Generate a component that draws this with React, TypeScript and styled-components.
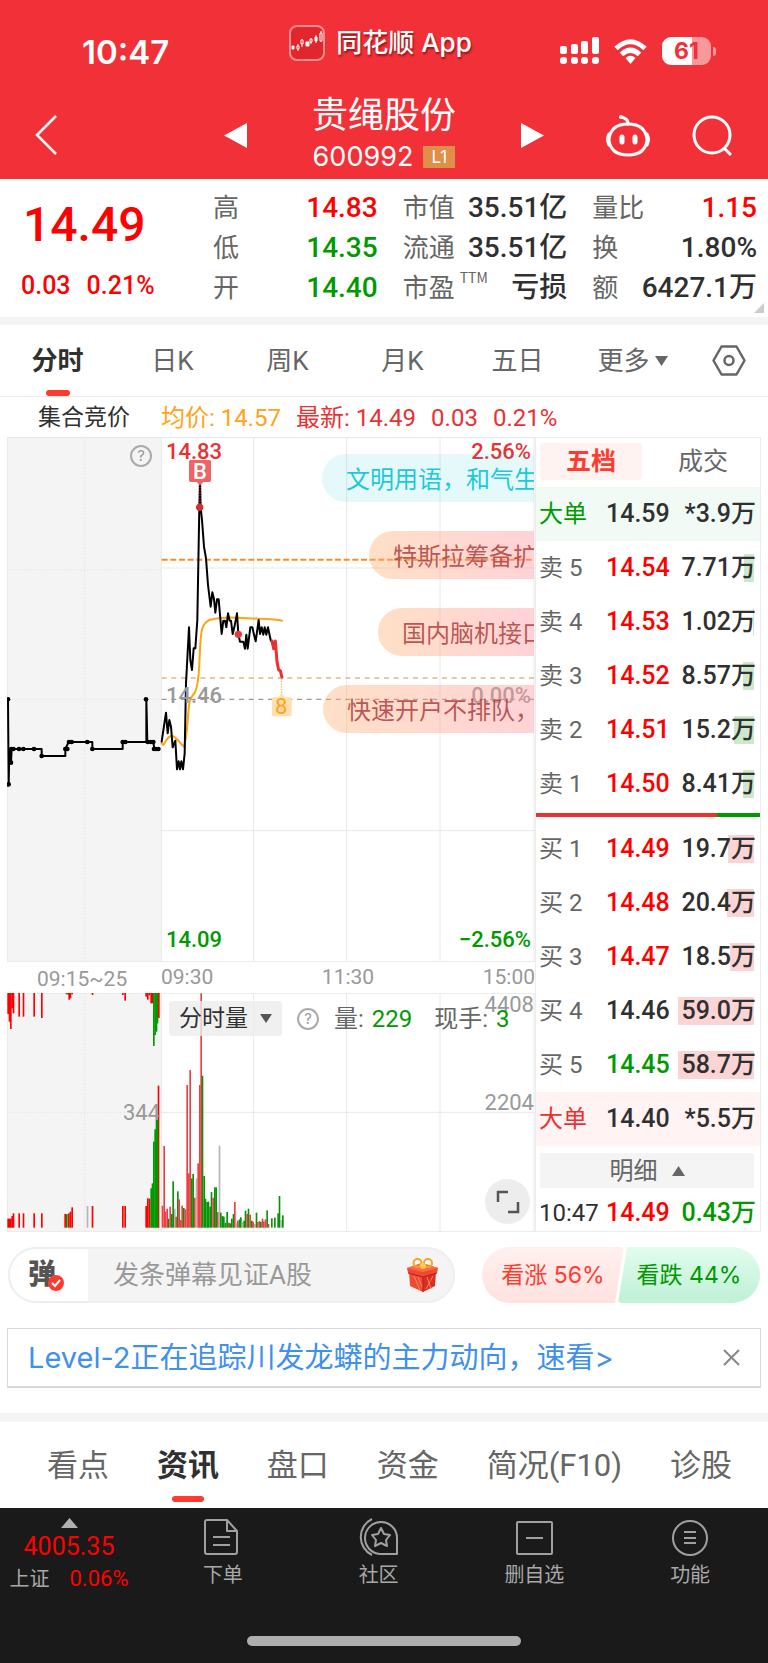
import React from 'react';
import styled, { createGlobalStyle, css } from 'styled-components';

const c = {
  brand: '#f23037',
  red: '#ff0000',
  softRed: '#eb3032',
  green: '#009900',
  ink: '#303030',
  grey: '#666666',
  pale: '#999999',
  line: '#ececec',
  band: '#f4f4f4',
  orange: '#ffa319',
};

const cjk = '"Noto Sans CJK SC", sans-serif';
const num = `Roboto, ${cjk}`;
const ui = `Inter, ${cjk}`;

const Global = createGlobalStyle`
  * { box-sizing: border-box; }
  body { margin: 0; background: #fff; color: ${c.ink}; font-family: ${num}; }
  button { border: 0; padding: 0; margin: 0; background: none; font: inherit; color: inherit; cursor: pointer; }
  a { color: inherit; text-decoration: none; }
  svg { display: block; flex: none; }
  table { border-collapse: collapse; }
  dl, dd, dt, h1, p { margin: 0; font-weight: inherit; }
`;

/* ---------- header ---------- */

const Header = styled.header`
  height: 179px;
  background: ${c.brand};
  color: #fff;
`;

const StatusBar = styled.div`
  display: grid;
  grid-template-columns: 1fr auto 1fr;
  align-items: center;
  height: 86px;
  padding: 0 57px 0 82px;
`;

const Clock = styled.time`
  padding-top: 17px;
  font: 600 33px/40px ${ui};
`;

const AppName = styled.div`
  display: flex;
  align-items: center;
  gap: 11px;
  margin-left: -32px;
  font: 500 26px/40px ${ui};
  text-shadow: 1px 2px 2px rgba(60, 0, 0, 0.55);
`;

const StatusIcons = styled.div`
  display: flex;
  justify-content: flex-end;
  align-items: center;
  gap: 15px;
  padding-top: 16px;
`;

const Battery = styled.span`
  position: relative;
  width: 49px;
  height: 28px;
  border-radius: 9px;
  background: linear-gradient(90deg, #fff 61%, #f9989b 61%);
  color: ${c.brand};
  font: 700 23px/28px ${ui};
  text-align: center;

  &::after {
    content: '';
    position: absolute;
    left: 51px;
    top: 10px;
    width: 3px;
    height: 9px;
    border-radius: 0 3px 3px 0;
    background: #f9989b;
  }
`;

const NavBar = styled.nav`
  display: grid;
  grid-template-columns: 1fr 320px 1fr;
  align-items: center;
  height: 93px;
  padding: 4px 35px 0;
`;

const NavSide = styled.div<{ $end?: boolean }>`
  display: flex;
  align-items: center;
  gap: 41px;
  justify-content: ${(p) => (p.$end ? 'flex-end' : 'flex-start')};
`;

const Switcher = styled.div`
  display: flex;
  align-items: center;
  justify-content: space-between;
`;

const StockTitle = styled.div`
  text-align: center;
`;

const StockName = styled.h1`
  font: 400 36px/44px ${cjk};
`;

const StockCode = styled.p`
  display: flex;
  align-items: center;
  justify-content: center;
  gap: 10px;
  font: 400 27px/46px ${ui};
`;

const LevelTag = styled.span`
  width: 32px;
  height: 22px;
  background: #e08f47;
  font: 400 17px/22px ${ui};
`;

/* ---------- quote ---------- */

const Quote = styled.section`
  display: flex;
  position: relative;
  height: 146px;
  padding: 9px 11px 0 0;
  border-bottom: 8px solid ${c.band};

  &::after {
    content: '';
    position: absolute;
    right: 4px;
    bottom: 4px;
    border: 5px solid;
    border-color: transparent #ccc #ccc transparent;
  }
`;

const LastPrice = styled.div`
  flex: 0 0 213px;
  padding-left: 21px;
  color: ${c.red};
  font-weight: 500;
`;

const BigPrice = styled.p`
  padding-left: 2px;
  font-size: 48px;
  line-height: 74px;
`;

const Change = styled.p`
  display: flex;
  gap: 16px;
  font-size: 25px;
  line-height: 48px;
`;

const Stats = styled.dl`
  flex: 1;
  display: grid;
  grid-template-columns: repeat(3, 1fr);
  grid-auto-rows: 40px;
  column-gap: 25px;
`;

const Stat = styled.div<{ $color?: string }>`
  display: flex;
  justify-content: space-between;
  white-space: nowrap;
  line-height: 40px;

  dt { color: ${c.grey}; font-size: 26px; }
  dd { color: ${(p) => p.$color || c.ink}; font-size: 28px; font-weight: 500; }
  sup { display: inline-block; margin-left: 5px; font: 400 14px/16px ${cjk}; vertical-align: 14px; }
`;

/* ---------- period tabs ---------- */

const PeriodTabs = styled.nav`
  display: grid;
  grid-template-columns: repeat(6, 115fr) 78fr;
  height: 72px;
  border-bottom: 1px solid ${c.line};
`;

const tabMark = css`
  &::after {
    content: '';
    position: absolute;
    left: 50%;
    bottom: 0;
    width: 24px;
    height: 6px;
    margin-left: -12px;
    border-radius: 3px;
    background: #ff3b30;
  }
`;

const PeriodTab = styled.button<{ $on?: boolean }>`
  position: relative;
  display: flex;
  align-items: center;
  justify-content: center;
  gap: 5px;
  font-size: 26px;
  line-height: 36px;
  color: ${(p) => (p.$on ? c.ink : c.grey)};
  font-weight: ${(p) => (p.$on ? 700 : 400)};
  ${(p) => p.$on && tabMark}
`;

const Summary = styled.div`
  display: flex;
  gap: 15px;
  height: 40px;
  padding-left: 38px;
  font-size: 24px;
  line-height: 42px;
  color: ${c.softRed};
`;

const SummaryLead = styled.span`
  width: 108px;
  color: ${c.ink};
  font-size: 23px;
`;

const Average = styled.span`
  color: ${c.orange};
`;

/* ---------- market board ---------- */

const Board = styled.main`
  display: flex;
  margin: 0 7px;
  height: 795px;
  border-bottom: 1px solid ${c.line};
`;

const Charts = styled.section`
  flex: 1;
  min-width: 0;
`;

const Pane = styled.div<{ $height: number }>`
  position: relative;
  height: ${(p) => p.$height}px;
  overflow: hidden;
`;

const Plot = styled.svg`
  width: 100%;
  height: 100%;
`;

const Mark = styled.span<{ $x: string; $y: number; $right?: boolean; $color: string; $bold?: boolean }>`
  position: absolute;
  ${(p) => (p.$right ? 'right' : 'left')}: ${(p) => p.$x};
  top: ${(p) => p.$y}px;
  font-size: 22px;
  line-height: 24px;
  font-weight: ${(p) => (p.$bold ? 500 : 400)};
  color: ${(p) => p.$color};
`;

const HelpButton = styled.button`
  width: 22px;
  height: 22px;
  border: 2px solid #aaa;
  border-radius: 50%;
  color: ${c.pale};
  font: 400 15px/18px ${ui};
`;

const AuctionHelp = styled(HelpButton)`
  position: absolute;
  left: 123px;
  top: 8px;
`;

const Comments = styled.div`
  position: absolute;
  left: 315px;
  right: 1px;
  top: 17px;
  display: flex;
  flex-direction: column;
  gap: 29px;
  overflow: hidden;
`;

const Comment = styled.span<{ $indent: number; $cool?: boolean }>`
  height: 48px;
  margin-left: ${(p) => p.$indent}px;
  padding-left: 24px;
  border-radius: 24px 0 0 24px;
  white-space: nowrap;
  font: 400 24px/48px ${cjk};
  color: ${(p) => (p.$cool ? '#1cc9dc' : 'rgba(176, 62, 62, 0.85)')};
  background: ${(p) =>
    p.$cool
      ? 'rgba(0, 196, 220, 0.1)'
      : 'linear-gradient(90deg, rgba(255, 176, 112, 0.4), rgba(255, 150, 160, 0.42))'};
`;

const TimeAxis = styled.div`
  display: flex;
  height: 32px;
  border-top: 1px solid ${c.line};
  color: ${c.pale};
  font-size: 21px;
  line-height: 30px;
`;

const AuctionTime = styled.span`
  width: 154px;
  padding-left: 30px;
  line-height: 34px;
`;

const SessionTime = styled.div`
  flex: 1;
  display: flex;
  justify-content: space-between;
`;

const VolumeBar = styled.div`
  position: absolute;
  left: 162px;
  top: 8px;
  display: flex;
  align-items: center;
  height: 35px;
  font-size: 24px;
  line-height: 34px;
  color: ${c.grey};
  white-space: nowrap;

  b { margin-left: 8px; font-weight: 400; color: ${c.green}; }
`;

const IndicatorSelect = styled.button`
  display: flex;
  align-items: center;
  gap: 12px;
  height: 35px;
  margin-right: 15px;
  padding: 0 10px;
  border-radius: 3px;
  background: rgba(236, 236, 236, 0.8);
  color: ${c.ink};
  font-size: 23px;
`;

const VolumeItem = styled.span<{ $gap: number }>`
  margin-left: ${(p) => p.$gap}px;
`;

const ExpandButton = styled.button`
  position: absolute;
  right: 5px;
  bottom: 7px;
  display: grid;
  place-items: center;
  width: 45px;
  height: 45px;
  border-radius: 50%;
  background: #ededed;
`;

/* ---------- order book ---------- */

const Book = styled.aside`
  flex: 0 0 226px;
  min-width: 0;
  border: solid ${c.line};
  border-width: 1px 1px 0 1px;
`;

const BookTabs = styled.div`
  display: flex;
  height: 49px;
  padding: 5px 0 7px 4px;
`;

const BookTab = styled.button<{ $on?: boolean }>`
  flex: 1;
  padding-left: 4px;
  border-radius: 4px;
  font-size: 25px;
  line-height: 36px;
  color: ${c.grey};
  ${(p) => p.$on && `flex: 0 0 102px; padding: 0; background: #fff3f2; color: #ff3b30; font-weight: 700;`}
`;

const Depth = styled.table`
  width: 100%;
  table-layout: fixed;
  line-height: 28px;
`;

const DepthRow = styled.tr<{ $bg?: string; $label?: string; $tall?: number }>`
  height: ${(p) => p.$tall || 54}px;
  background: ${(p) => p.$bg || 'none'};

  th { color: ${(p) => p.$label || c.grey}; }
`;

const Level = styled.th`
  width: 70px;
  padding: 0 0 0 3px;
  text-align: left;
  font-size: 24px;
  font-weight: 400;
  white-space: nowrap;
`;

const Price = styled.td<{ $color: string }>`
  width: 68px;
  padding: 0;
  font-size: 25px;
  font-weight: 500;
  color: ${(p) => p.$color};
`;

const Lots = styled.td<{ $color?: string }>`
  padding: 0 4px 0 0;
  text-align: right;
  font-size: 25px;
  font-weight: 500;
  white-space: nowrap;
  color: ${(p) => p.$color || c.ink};
`;

const LotsFill = styled.span<{ $width: number; $color: string }>`
  display: block;
  background: linear-gradient(${(p) => p.$color}, ${(p) => p.$color}) no-repeat right 2px top / ${(p) => p.$width}px 100%;
`;

const Ratio = styled.div`
  height: 4px;
  margin: 2px 0 5px;
  background: linear-gradient(90deg, ${c.softRed} 81%, ${c.green} 81%);
`;

const DetailButton = styled.button`
  display: flex;
  align-items: center;
  justify-content: center;
  gap: 14px;
  width: calc(100% - 10px);
  height: 35px;
  margin: 7px 5px 4px 4px;
  background: ${c.band};
  color: ${c.grey};
  font-size: 24px;
  line-height: 34px;
`;

/* ---------- comment box, votes, banner ---------- */

const ActionRow = styled.section`
  display: flex;
  justify-content: space-between;
  padding: 15px 8px 0;
`;

const CommentBox = styled.label`
  display: flex;
  align-items: center;
  flex: 0 1 447px;
  height: 56px;
  padding-right: 14px;
  overflow: hidden;
  border: 2px solid #eee;
  border-radius: 28px;
  background: ${c.band};
`;

const CommentToggle = styled.span`
  position: relative;
  flex: 0 0 78px;
  height: 56px;
  padding-left: 18px;
  background: #fff;
  color: #555;
  font: 900 28px/50px ${cjk};

  svg { position: absolute; left: 38px; top: 28px; }
`;

const CommentInput = styled.input`
  flex: 1;
  min-width: 0;
  padding: 0 0 0 25px;
  border: 0;
  outline: 0;
  background: none;
  font: 400 26px/40px ${num};

  &::placeholder { color: ${c.pale}; opacity: 1; }
`;

const Votes = styled.div`
  display: flex;
`;

const Vote = styled.button<{ $up?: boolean }>`
  width: 142px;
  height: 56px;
  font: 400 23px/56px ${ui};
  ${(p) =>
    p.$up
      ? css`
          border-radius: 28px 4px 6px 28px;
          background: linear-gradient(#fff0ef, #ffe2df);
          color: #ff3b30;
          clip-path: polygon(0 0, 100% 0, calc(100% - 9px) 100%, 0 100%);
        `
      : css`
          margin-left: -6px;
          border-radius: 6px 28px 28px 4px;
          background: linear-gradient(#e2fcee, #bff0d6);
          color: ${c.green};
          clip-path: polygon(9px 0, 100% 0, 100% 100%, 0 100%);
        `}
`;

const Banner = styled.section`
  display: flex;
  align-items: center;
  justify-content: space-between;
  height: 60px;
  margin: 25px 7px;
  padding: 0 20px;
  border: 1px solid #d8d8d8;
  border-bottom-width: 2px;
  color: #4090ee;
  font: 400 29px/58px ${ui};
`;

const InfoTabs = styled.nav`
  display: flex;
  justify-content: space-between;
  height: 95px;
  padding: 0 36px 0 47px;
  border-top: 9px solid ${c.band};
`;

const InfoTab = styled.button<{ $on?: boolean }>`
  position: relative;
  font-size: 31px;
  line-height: 88px;
  color: ${(p) => (p.$on ? c.ink : c.grey)};
  font-weight: ${(p) => (p.$on ? 700 : 400)};
  ${(p) => p.$on && tabMark}

  &::after { bottom: 6px; width: 32px; margin-left: -16px; }
`;

/* ---------- bottom bar ---------- */

const Footer = styled.footer`
  height: 155px;
  background: #1a1a1a;
  color: #a8a8a8;
`;

const Dock = styled.div`
  display: grid;
  grid-template-columns: 145px repeat(4, 1fr);
  height: 128px;
`;

const IndexQuote = styled.a`
  display: flex;
  flex-direction: column;
  align-items: center;
  width: 138px;
  padding-top: 10px;
  color: ${c.red};
  font-size: 25px;
  line-height: 38px;
`;

const IndexLine = styled.span`
  display: flex;
  gap: 20px;
  font-size: 22px;
  line-height: 26px;

  small { color: #a8a8a8; font-size: 20px; }
`;

const DockItem = styled.a`
  display: flex;
  flex-direction: column;
  align-items: center;
  gap: 5px;
  padding-top: 10px;
  font-size: 20px;
  line-height: 28px;
`;

const HomeIndicator = styled.div`
  width: 274px;
  height: 10px;
  margin: 0 auto;
  border-radius: 5px;
  background: #aeaeae;
`;

/* ---------- data ---------- */

const stats: [React.ReactNode, string, string?][] = [
  ['高', '14.83', c.red],
  ['市值', '35.51亿'],
  ['量比', '1.15', c.red],
  ['低', '14.35', c.green],
  ['流通', '35.51亿'],
  ['换', '1.80%'],
  ['开', '14.40', c.green],
  [<>市盈<sup>TTM</sup></>, '亏损'],
  ['额', '6427.1万'],
];

const asks: [string, string, string, number][] = [
  ['卖 5', '14.54', '7.71万', 10],
  ['卖 4', '14.53', '1.02万', 1],
  ['卖 3', '14.52', '8.57万', 11],
  ['卖 2', '14.51', '15.2万', 20],
  ['卖 1', '14.50', '8.41万', 11],
];

const bids: [string, string, string, number, string][] = [
  ['买 1', '14.49', '19.7万', 26, c.red],
  ['买 2', '14.48', '20.4万', 27, c.red],
  ['买 3', '14.47', '18.5万', 24, c.red],
  ['买 4', '14.46', '59.0万', 76, c.ink],
  ['买 5', '14.45', '58.7万', 76, c.green],
];

const PRICE =
  '485,935 498,848 503,910 508,870 513,890 518,952 526,932 531,1018 536,994 540,1018 544,994 549,1018 554,970 558,760 567,592 571,690 576,720 581,655 586,655 592,570 598,232 600,150 602,232 606,270 612,350 618,385 624,465 632,530 637,487 642,508 646,548 651,508 656,508 665,612 670,572 675,572 679,592 684,550 689,572 693,572 698,612 703,592 711,550 715,612 720,635 730,635 735,656 739,614 743,656 751,592 757,592 762,614 767,634 776,570 780,612 785,592 790,614 794,592 799,614 804,592 812,630 817,638';
const FALLING = '816,633 821,656 826,633 831,695 836,720 841,722 846,742';
const AUCTION =
  '24,808 26,1063 28,957 33,998 35,957 125,957 125,978 196,978 196,957 206,936 277,936 277,957 368,957 368,936 439,936 439,808 442,936 460,936 463,957 478,957';
const AUCTION_DOTS = [
  [24, 808], [26, 1063], [33, 998], [34, 957], [40, 957], [57, 957], [70, 957], [102, 957], [125, 978],
  [196, 957], [202, 957], [207, 936], [215, 936], [262, 936], [277, 957], [368, 936], [376, 936], [438, 808],
  [443, 936], [452, 936], [460, 936], [462, 957], [468, 957], [475, 957],
];

// x position, top of the bar, and colour key: r rise, g fall, n unchanged
type Bar = [number, number, 'r' | 'g' | 'n'];
const VOLUME: Bar[] = [
  [487, 827, 'r'], [492, 648, 'r'], [496, 845, 'r'], [501, 836, 'r'], [505, 866, 'g'], [510, 830, 'r'],
  [515, 852, 'g'], [519, 754, 'g'], [524, 836, 'n'], [528, 860, 'r'], [533, 784, 'g'], [537, 808, 'r'],
  [542, 870, 'r'], [546, 827, 'r'], [551, 834, 'g'], [556, 838, 'r'], [561, 465, 'r'], [566, 730, 'r'],
  [570, 420, 'r'], [575, 745, 'g'], [579, 732, 'g'], [584, 803, 'r'], [589, 745, 'n'], [594, 700, 'r'],
  [599, 465, 'r'], [603, 190, 'r'], [607, 437, 'g'], [612, 738, 'g'], [616, 806, 'g'], [621, 816, 'g'],
  [625, 815, 'g'], [630, 830, 'g'], [634, 786, 'g'], [639, 803, 'r'], [644, 772, 'g'], [648, 772, 'g'],
  [653, 846, 'r'], [658, 647, 'n'], [662, 848, 'g'], [667, 858, 'g'], [671, 860, 'g'], [676, 878, 'g'],
  [681, 846, 'g'], [686, 878, 'r'], [690, 880, 'g'], [695, 866, 'g'], [700, 852, 'g'], [704, 816, 'r'],
  [709, 880, 'n'], [713, 872, 'r'], [718, 868, 'g'], [722, 862, 'g'], [727, 876, 'n'], [732, 872, 'g'],
  [736, 842, 'g'], [741, 852, 'r'], [745, 836, 'g'], [750, 854, 'r'], [755, 872, 'g'], [759, 876, 'r'],
  [764, 882, 'n'], [769, 848, 'g'], [773, 876, 'r'], [778, 873, 'r'], [782, 876, 'g'], [787, 866, 'r'],
  [791, 874, 'r'], [796, 868, 'r'], [801, 841, 'g'], [805, 882, 'r'], [815, 865, 'g'], [824, 863, 'g'],
  [834, 850, 'g'], [838, 798, 'g'], [843, 870, 'n'], [848, 856, 'g'],
];
const MATCHED: Bar[] = [
  [24, 866, 'r'], [28, 866, 'r'], [32, 866, 'r'], [36, 858, 'r'], [40, 850, 'r'], [57, 850, 'r'], [70, 850, 'r'],
  [102, 850, 'r'], [125, 850, 'r'], [195, 852, 'r'], [200, 852, 'g'], [206, 850, 'r'], [211, 845, 'r'],
  [216, 832, 'r'], [262, 828, 'n'], [277, 828, 'r'], [368, 828, 'r'], [375, 828, 'r'], [438, 828, 'r'],
  [443, 805, 'r'], [448, 806, 'r'], [453, 775, 'g'], [457, 760, 'g'], [461, 635, 'g'], [465, 598, 'g'],
  [469, 570, 'g'], [475, 467, 'r'], [472, 570, 'g'],
];
const UNMATCHED: Bar[] = [
  [24, 252, 'r'], [28, 275, 'r'], [32, 297, 'r'], [36, 235, 'r'], [40, 250, 'r'], [57, 260, 'r'], [70, 260, 'r'],
  [102, 260, 'r'], [125, 264, 'r'], [199, 193, 'g'], [204, 194, 'r'], [207, 209, 'r'], [211, 205, 'r'],
  [216, 193, 'r'], [277, 195, 'r'], [368, 195, 'r'], [375, 212, 'r'], [438, 200, 'r'], [443, 209, 'r'],
  [448, 196, 'r'], [453, 220, 'r'], [457, 220, 'r'], [461, 348, 'g'], [465, 315, 'g'], [469, 305, 'g'],
  [472, 280, 'g'], [476, 264, 'r'],
];
const liveFill = { r: '#ef3f42', g: '#0a930a', n: '#b5b5b5' };
const auctionFill = { r: '#ff0000', g: '#009900', n: '#b5b5b5' };

/* ---------- charts ---------- */

function PriceChart() {
  return (
    <Plot viewBox="21 21 1584 1572" preserveAspectRatio="none" aria-hidden="true">
      <rect x="21" y="21" width="463" height="1572" fill="#f4f4f4" />
      <g stroke="#e8e8e8" strokeWidth="3">
        <path d="M21 23H1605M484 414H1605M484 1202H1605" />
        <path d="M22 21V1593M484 21V1593M761 21V1593M1040 21V1593M1320 21V1593M1602 21V1593" />
        <path d="M21 808H484" stroke="#eeeeee" />
        <path d="M21 419H484M254 21V1593" strokeDasharray="5 5" stroke="#e6e6e6" />
      </g>
      <path d="M485 389H1602" stroke="#ff8a1f" strokeWidth="6" strokeDasharray="18 8" />
      <path d="M485 744H1602" stroke="#e0b983" strokeWidth="4" strokeDasharray="15 14" />
      <path d="M485 808H1602" stroke="#999" strokeWidth="4" strokeDasharray="15 14" />
      <g fill="none" strokeLinejoin="round" strokeLinecap="round" strokeWidth="6">
        <path
          stroke={c.orange}
          d="M485 940L490 945C497 935 503 917 516 917C530 920 540 943 552 950C558 930 562 890 564 860C568 800 572 806 584 788C597 765 597 720 599 680C602 600 603 572 640 567C690 556 700 566 780 566C820 567 832 568 846 572"
        />
        <polyline points={PRICE} stroke="#000" />
        <polyline points={FALLING} stroke={c.softRed} strokeWidth="9" />
        <polyline points={AUCTION} stroke="#000" />
      </g>
      {AUCTION_DOTS.map(([x, y]) => (
        <circle key={`${x}-${y}`} cx={x} cy={y} r="7" />
      ))}
      <path d="M600 155V225" stroke="#b02020" strokeWidth="4" strokeDasharray="4 4" />
      <circle cx="599" cy="232" r="11" fill="#d92b2e" />
      <circle cx="715" cy="613" r="11" fill="#e8393c" />
      <path d="M845 745V790" stroke={c.orange} strokeWidth="3" strokeDasharray="4 4" />
      <path d="M820 802H835L845 788L855 802H871Q875 802 875 806V855Q875 859 871 859H820Q816 859 816 855V806Q816 802 820 802Z" fill="#ffdfb0" />
      <path d="M572 90H628Q633 90 633 95V151Q633 156 628 156H610L600 166L590 156H572Q567 156 567 151V95Q567 90 572 90Z" fill="#ef6265" />
    </Plot>
  );
}

function VolumeChart() {
  return (
    <Plot viewBox="21 189 1584 714" preserveAspectRatio="none" aria-hidden="true">
      <rect x="21" y="189" width="463" height="714" fill="#f4f4f4" />
      <g stroke="#e8e8e8" strokeWidth="3">
        <path d="M21 190H1605M484 547H1605M22 189V903M484 189V903M761 189V903M1040 189V903M1320 189V903M1602 189V903" />
        <path d="M21 547H484M254 189V903" strokeDasharray="5 5" stroke="#e6e6e6" />
      </g>
      {UNMATCHED.map(([x, y, k]) => (
        <rect key={x} x={x - 2} y="189" width="5" height={y - 189} fill={auctionFill[k]} />
      ))}
      {MATCHED.map(([x, y, k]) => (
        <rect key={x} x={x - 2} y={y} width="5" height={893 - y} fill={auctionFill[k]} />
      ))}
      {VOLUME.map(([x, y, k]) => (
        <rect key={x} x={x - 2} y={y} width="5" height={893 - y} fill={liveFill[k]} />
      ))}
    </Plot>
  );
}

/* ---------- icons ---------- */

const Triangle = ({ w, h, d, fill }: { w: number; h: number; d: string; fill: string }) => (
  <svg width={w} height={h} viewBox={`0 0 ${w} ${h}`} aria-hidden="true"><path d={d} fill={fill} /></svg>
);

const AppIcon = () => (
  <svg width="36" height="36" viewBox="0 0 36 36" aria-hidden="true">
    <rect x="1" y="1" width="34" height="34" rx="7" fill="#e3262b" stroke="#f98f92" strokeWidth="2" />
    <g fill="#fff" stroke="#fff">
      <path d="M3 21h2v3H3zM17 17h3v4h-3zM26 12h2v4h-2z" strokeWidth="1" />
      <path d="M9 19v7M13 14v8M22 13v6M27 10v8M32 6v11" strokeWidth="1" />
      <path d="M8 21h2v3H8zM12 15h2v4h-2zM21 14h2v3h-2zM31 8h2v8h-2z" fill="#e3262b" strokeWidth="1" />
    </g>
  </svg>
);

const Signal = () => (
  <svg width="39" height="28" viewBox="0 0 39 28" fill="#fff" aria-hidden="true">
    <rect x="0" y="9" width="7" height="8" rx="2" /><rect x="11" y="7" width="7" height="10" rx="2" />
    <rect x="21" y="4" width="7" height="13" rx="2" /><rect x="32" y="0" width="7" height="17" rx="2" />
    <rect x="0" y="20" width="7" height="7" rx="3" /><rect x="11" y="20" width="7" height="7" rx="3" />
    <rect x="21" y="20" width="7" height="7" rx="3" /><rect x="32" y="20" width="7" height="7" rx="3" />
  </svg>
);

const Wifi = () => (
  <svg width="33" height="25" viewBox="0 0 33 25" fill="none" stroke="#fff" strokeWidth="5" aria-hidden="true">
    <path d="M2 9.500Q16.500-4 31 9.500" /><path d="M7.500 15.500Q16.500 7 25.500 15.500" />
    <path d="M16.500 25L11.500 19Q16.500 14.500 21.500 19Z" fill="#fff" stroke="none" />
  </svg>
);

const BackIcon = () => (
  <svg width="23" height="40" viewBox="0 0 23 40" fill="none" stroke="#fff" strokeWidth="2.500" aria-hidden="true">
    <path d="M21 1L2 20L21 39" />
  </svg>
);

const RobotIcon = () => (
  <svg width="46" height="44" viewBox="0 0 46 44" fill="none" stroke="#fff" strokeWidth="3" strokeLinecap="round" aria-hidden="true">
    <path d="M23 11C33 11 41 15 42 27C41 36 36 42 23 42C10 42 5 36 4 27C5 15 13 11 23 11Z" />
    <path d="M4 21Q1 26 4 32M42 21Q45 26 42 32M23 11Q24 6 16 4" />
    <circle cx="16" cy="4" r="2" fill="#fff" stroke="none" />
    <path d="M17 24V29M30 24V29" strokeWidth="5" />
  </svg>
);

const SearchIcon = () => (
  <svg width="41" height="41" viewBox="0 0 41 41" fill="none" stroke="#fff" strokeWidth="3" aria-hidden="true">
    <circle cx="20" cy="20" r="18" /><path d="M32 33L39 40" />
  </svg>
);

const SettingsIcon = () => (
  <svg width="34" height="31" viewBox="0 0 34 31" fill="none" stroke="#666" strokeWidth="2.500" strokeLinejoin="round" aria-hidden="true">
    <path d="M9.500 1.500H24.500L32.500 15.500L24.500 29.500H9.500L1.500 15.500Z" /><circle cx="17" cy="15.500" r="4.500" />
  </svg>
);

const ExpandIcon = () => (
  <svg width="24" height="24" viewBox="0 0 24 24" fill="none" stroke="#555" strokeWidth="2.500" aria-hidden="true">
    <path d="M2 12V2H12M22 12V22H12" />
  </svg>
);

const CheckBadge = () => (
  <svg width="16" height="16" viewBox="0 0 16 16" aria-hidden="true">
    <circle cx="8" cy="8" r="8" fill="#ff3b30" />
    <path d="M4 8L7 11L12 5" fill="none" stroke="#fff" strokeWidth="2" />
  </svg>
);

const GiftIcon = () => (
  <svg width="33" height="35" viewBox="0 0 33 35" aria-hidden="true">
    <path d="M3 13L17 18V34L4 28Z" fill="#ef4b32" /><path d="M30 13L17 18V34L29 28Z" fill="#d92e22" />
    <path d="M1 10L16 5L32 10L31 15L17 19L2 15Z" fill="#f04a35" />
    <path d="M1 10L16 5L32 10L17 14Z" fill="#ff6b4a" />
    <path d="M17 19V34M2 15L17 19L31 15" stroke="#b82018" fill="none" />
    <path d="M8 18L14 32M12 19L16 29M21 19L25 31M27 18L20 31" stroke="#ff8360" strokeWidth="1" />
    <g fill="none" stroke="#f5a623" strokeWidth="2">
      <ellipse cx="11.500" cy="5" rx="4" ry="4" /><ellipse cx="22" cy="5" rx="4" ry="4" />
    </g>
    <circle cx="17" cy="8" r="3" fill="#ffcf4a" />
  </svg>
);

const CloseIcon = () => (
  <svg width="17" height="17" viewBox="0 0 17 17" stroke="#888" strokeWidth="2" aria-hidden="true">
    <path d="M1 1L16 16M16 1L1 16" />
  </svg>
);

const DockSvg = ({ children }: { children: React.ReactNode }) => (
  <svg width="40" height="38" viewBox="0 0 40 38" fill="none" stroke="#a0a0a0" strokeWidth="2" strokeLinejoin="round" aria-hidden="true">
    {children}
  </svg>
);

const dock: [string, React.ReactNode][] = [
  ['下单', <><path d="M24 2H4Q2 2 2 4V34Q2 36 4 36H32Q34 36 34 34V13L24 2V13H34" /><path d="M10 19H27M10 27H27" /></>],
  ['社区', <><path d="M38 36H21A16 16 0 1 1 38 20Z" /><path d="M13 1A20 20 0 0 0 13 37" /><path d="M22 10L25 16L31 17L27 22L28 28L22 25L16 28L17 22L13 17L19 16Z" /></>],
  ['删自选', <><rect x="3" y="4" width="35" height="32" rx="1" /><path d="M12 20H29" /></>],
  ['功能', <><circle cx="20" cy="20" r="17" /><path d="M14 14H26M14 20H26M14 25H26" /></>],
];

/* ---------- page ---------- */

export default function App() {
  return (
    <>
      <Global />
      <Header>
        <StatusBar>
          <Clock>10:47</Clock>
          <AppName><AppIcon /><span>同花顺 App</span></AppName>
          <StatusIcons><Signal /><Wifi /><Battery>61</Battery></StatusIcons>
        </StatusBar>
        <NavBar>
          <NavSide><button aria-label="返回"><BackIcon /></button></NavSide>
          <Switcher>
            <button aria-label="上一只"><Triangle w={23} h={25} d="M23 0V25L0 12.500Z" fill="#fff" /></button>
            <StockTitle>
              <StockName>贵绳股份</StockName>
              <StockCode>600992<LevelTag>L1</LevelTag></StockCode>
            </StockTitle>
            <button aria-label="下一只"><Triangle w={23} h={25} d="M0 0L23 12.500L0 25Z" fill="#fff" /></button>
          </Switcher>
          <NavSide $end>
            <button aria-label="助手"><RobotIcon /></button>
            <button aria-label="搜索"><SearchIcon /></button>
          </NavSide>
        </NavBar>
      </Header>

      <Quote>
        <LastPrice>
          <BigPrice>14.49</BigPrice>
          <Change><span>0.03</span><span>0.21%</span></Change>
        </LastPrice>
        <Stats>
          {stats.map(([label, value, color], i) => (
            <Stat key={i} $color={color}><dt>{label}</dt><dd>{value}</dd></Stat>
          ))}
        </Stats>
      </Quote>

      <PeriodTabs>
        <PeriodTab $on>分时</PeriodTab>
        <PeriodTab>日K</PeriodTab>
        <PeriodTab>周K</PeriodTab>
        <PeriodTab>月K</PeriodTab>
        <PeriodTab>五日</PeriodTab>
        <PeriodTab>更多<Triangle w={13} h={10} d="M0 0H13L6.500 10Z" fill="#666" /></PeriodTab>
        <PeriodTab aria-label="设置"><SettingsIcon /></PeriodTab>
      </PeriodTabs>

      <Summary>
        <SummaryLead>集合竞价</SummaryLead>
        <Average>均价: 14.57</Average>
        <span>最新: 14.49</span>
        <span>0.03</span>
        <span>0.21%</span>
      </Summary>

      <Board>
        <Charts>
          <Pane $height={524}>
            <PriceChart />
            <AuctionHelp aria-label="集合竞价说明">?</AuctionHelp>
            <Mark $x="159px" $y={3} $color={c.softRed} $bold>14.83</Mark>
            <Mark $x="4px" $y={3} $right $color={c.softRed} $bold>2.56%</Mark>
            <Mark $x="186px" $y={23} $color="#fff" $bold>B</Mark>
            <Mark $x="159px" $y={247} $color={c.pale} $bold>14.46</Mark>
            <Mark $x="4px" $y={247} $right $color={c.pale} $bold>0.00%</Mark>
            <Mark $x="268px" $y={258} $color={c.orange}>8</Mark>
            <Mark $x="159px" $y={491} $color={c.green} $bold>14.09</Mark>
            <Mark $x="4px" $y={491} $right $color={c.green} $bold>−2.56%</Mark>
            <Comments>
              <Comment $indent={0} $cool>文明用语，和气生</Comment>
              <Comment $indent={47}>特斯拉筹备扩</Comment>
              <Comment $indent={56}>国内脑机接口</Comment>
              <Comment $indent={1}>快速开户不排队，</Comment>
            </Comments>
          </Pane>
          <TimeAxis>
            <AuctionTime>09:15~25</AuctionTime>
            <SessionTime><span>09:30</span><span>11:30</span><span>15:00</span></SessionTime>
          </TimeAxis>
          <Pane $height={238}>
            <VolumeChart />
            <Mark $x="375px" $y={108} $right $color={c.pale}>344</Mark>
            <Mark $x="1px" $y={0} $right $color={c.pale}>4408</Mark>
            <Mark $x="1px" $y={98} $right $color={c.pale}>2204</Mark>
            <VolumeBar>
              <IndicatorSelect>分时量<Triangle w={12} h={9} d="M0 0H12L6 9Z" fill="#555" /></IndicatorSelect>
              <HelpButton aria-label="指标说明">?</HelpButton>
              <VolumeItem $gap={15}>量:<b>229</b></VolumeItem>
              <VolumeItem $gap={22}>现手:<b>3</b></VolumeItem>
            </VolumeBar>
            <ExpandButton aria-label="全屏"><ExpandIcon /></ExpandButton>
          </Pane>
        </Charts>

        <Book>
          <BookTabs><BookTab $on>五档</BookTab><BookTab>成交</BookTab></BookTabs>
          <Depth>
            <tbody>
              <DepthRow $bg="#f2faf6" $label={c.green}>
                <Level>大单</Level><Price $color={c.ink}>14.59</Price><Lots>*3.9万</Lots>
              </DepthRow>
              {asks.map(([label, price, lots, width]) => (
                <DepthRow key={label}>
                  <Level>{label}</Level>
                  <Price $color={c.red}>{price}</Price>
                  <Lots><LotsFill $width={width} $color="#cce9cc">{lots}</LotsFill></Lots>
                </DepthRow>
              ))}
            </tbody>
          </Depth>
          <Ratio />
          <Depth>
            <tbody>
              {bids.map(([label, price, lots, width, color]) => (
                <DepthRow key={label}>
                  <Level>{label}</Level>
                  <Price $color={color}>{price}</Price>
                  <Lots><LotsFill $width={width} $color="#fbd5d5">{lots}</LotsFill></Lots>
                </DepthRow>
              ))}
              <DepthRow $bg="#fff3f3" $label={c.softRed}>
                <Level>大单</Level><Price $color={c.ink}>14.40</Price><Lots>*5.5万</Lots>
              </DepthRow>
            </tbody>
          </Depth>
          <DetailButton>明细<Triangle w={13} h={10} d="M0 10H13L6.500 0Z" fill="#666" /></DetailButton>
          <Depth>
            <tbody>
              <DepthRow $tall={42} $label={c.ink}>
                <Level>10:47</Level><Price $color={c.red}>14.49</Price><Lots $color={c.green}>0.43万</Lots>
              </DepthRow>
            </tbody>
          </Depth>
        </Book>
      </Board>

      <ActionRow>
        <CommentBox>
          <CommentToggle>弹<CheckBadge /></CommentToggle>
          <CommentInput placeholder="发条弹幕见证A股" />
          <GiftIcon />
        </CommentBox>
        <Votes>
          <Vote $up>看涨 56%</Vote>
          <Vote>看跌 44%</Vote>
        </Votes>
      </ActionRow>

      <Banner>
        <a href="#level2">Level-2正在追踪川发龙蟒的主力动向，速看&gt;</a>
        <button aria-label="关闭"><CloseIcon /></button>
      </Banner>

      <InfoTabs>
        <InfoTab>看点</InfoTab>
        <InfoTab $on>资讯</InfoTab>
        <InfoTab>盘口</InfoTab>
        <InfoTab>资金</InfoTab>
        <InfoTab>简况(F10)</InfoTab>
        <InfoTab>诊股</InfoTab>
      </InfoTabs>

      <Footer>
        <Dock>
          <IndexQuote href="#index">
            <Triangle w={17} h={10} d="M0 10H17L8.500 0Z" fill="#b0b0b0" />
            <span>4005.35</span>
            <IndexLine><small>上证</small>0.06%</IndexLine>
          </IndexQuote>
          {dock.map(([label, icon]) => (
            <DockItem key={label} href={`#${label}`}><DockSvg>{icon}</DockSvg>{label}</DockItem>
          ))}
        </Dock>
        <HomeIndicator />
      </Footer>
    </>
  );
}
